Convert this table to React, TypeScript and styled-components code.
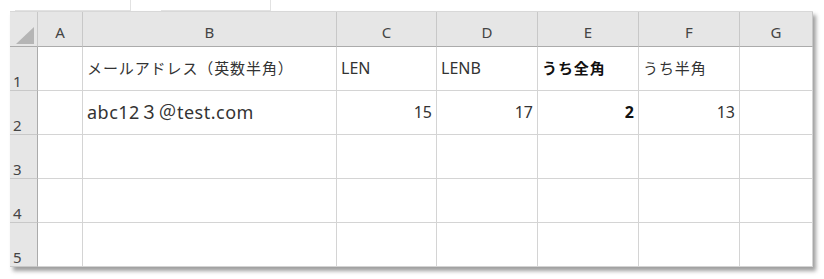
import React from "react";
import styled, { createGlobalStyle } from "styled-components";

const GlobalStyle = createGlobalStyle`
  html, body {
    margin: 0;
    padding: 0;
    background: #ffffff;
  }
  body {
    font-family: "Noto Sans", "Noto Sans CJK JP", sans-serif;
  }
  * { box-sizing: border-box; }
`;

const Page = styled.div`
  width: 824px;
  height: 279px;
  background: #ffffff;
  overflow: hidden;
`;

const FormulaStrip = styled.div`
  display: flex;
  height: 11px;
  padding-left: 15px;
  gap: 30px;
`;

const StripBox = styled.div<{ $w: number }>`
  width: ${(p) => p.$w}px;
  height: 11px;
  border-bottom: 1px solid #e2e2e2;
  border-right: 1px solid #e2e2e2;
`;

const Sheet = styled.div`
  margin-left: 10px;
  width: 803px;
  display: grid;
  grid-template-columns: 28px 45px 254px 100px 101px 101px 101px 73px;
  grid-template-rows: 35px repeat(5, 44px);
  box-shadow: 3px 4px 4px rgba(0, 0, 0, 0.38);
  background: #ffffff;
  border-top: 1px solid #d8d8d8;
`;

const Corner = styled.div`
  background: #e6e6e6;
  border-right: 1px solid #c8c8c8;
  border-bottom: 1px solid #ababab;
  display: flex;
  align-items: flex-end;
  justify-content: flex-end;
  padding: 0 3px 2px 0;
`;

const ColHead = styled.div`
  background: #e6e6e6;
  border-right: 1px solid #c8c8c8;
  border-bottom: 1px solid #ababab;
  color: #444444;
  font-family: "Noto Sans", sans-serif;
  font-size: 15px;
  display: flex;
  align-items: flex-end;
  justify-content: center;
  padding-bottom: 6px;
  line-height: 1;
`;

const RowHead = styled.div`
  background: #e6e6e6;
  border-right: 1px solid #ababab;
  border-bottom: 1px solid #c8c8c8;
  color: #444444;
  font-family: "Noto Sans", sans-serif;
  font-size: 15px;
  line-height: 1;
  display: flex;
  align-items: flex-end;
  padding: 0 0 1px 3px;
`;

type Align = "left" | "right";

const Cell = styled.div<{ $align?: Align; $bold?: boolean; $size?: number; $track?: number; $pb?: number }>`
  border-right: 1px solid #d4d4d4;
  border-bottom: 1px solid #d4d4d4;
  display: flex;
  align-items: flex-end;
  justify-content: ${(p) => (p.$align === "right" ? "flex-end" : "flex-start")};
  padding: 0 4px ${(p) => p.$pb ?? 14}px 4px;
  font-family: "Noto Sans", "Noto Sans CJK JP", sans-serif;
  font-size: ${(p) => p.$size ?? 16}px;
  font-weight: ${(p) => (p.$bold ? 700 : 400)};
  letter-spacing: ${(p) => p.$track ?? 0}px;
  color: ${(p) => (p.$bold ? "#111111" : "#333333")};
  line-height: 1;
  white-space: nowrap;
`;

const SelectAll = () => (
  <svg width="18" height="17" viewBox="0 0 18 17">
    <polygon points="18,0 18,17 0,17" fill="#b5b5b5" />
  </svg>
);

const columns = ["A", "B", "C", "D", "E", "F", "G"];

type CellData = { text?: string; align?: Align; bold?: boolean; size?: number; track?: number; pb?: number };

const rows: CellData[][] = [
  [
    {},
    { text: "メールアドレス（英数半角）", track: 0.9, size: 15 },
    { text: "LEN" },
    { text: "LENB" },
    { text: "うち全角", bold: true, track: 0.9, size: 15 },
    { text: "うち半角", track: 0.9, size: 15 },
    {},
  ],
  [
    {},
    { text: "abc12３＠test.com", size: 18, pb: 13, track: 0.5 },
    { text: "15", align: "right" },
    { text: "17", align: "right" },
    { text: "2", align: "right", bold: true },
    { text: "13", align: "right" },
    {},
  ],
  [{}, {}, {}, {}, {}, {}, {}],
  [{}, {}, {}, {}, {}, {}, {}],
  [{}, {}, {}, {}, {}, {}, {}],
];

export default function App() {
  return (
    <Page>
      <GlobalStyle />
      <FormulaStrip>
        <StripBox $w={116} />
        <StripBox $w={110} />
      </FormulaStrip>
      <Sheet>
        <Corner>
          <SelectAll />
        </Corner>
        {columns.map((c) => (
          <ColHead key={c}>{c}</ColHead>
        ))}
        {rows.map((row, ri) => (
          <React.Fragment key={ri}>
            <RowHead>{ri + 1}</RowHead>
            {row.map((cell, ci) => (
              <Cell
                key={ci}
                $align={cell.align}
                $bold={cell.bold}
                $size={cell.size}
                $track={cell.track}
                $pb={cell.pb}
              >
                {cell.text}
              </Cell>
            ))}
          </React.Fragment>
        ))}
      </Sheet>
    </Page>
  );
}
